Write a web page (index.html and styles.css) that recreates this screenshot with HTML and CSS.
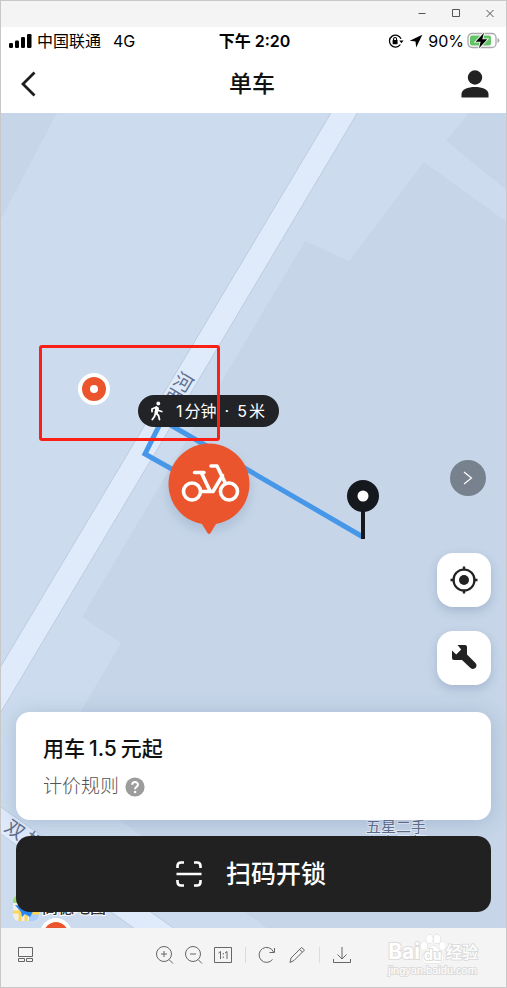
FILE: index.html
```html
<!DOCTYPE html>
<html lang="zh-CN">
<head>
<meta charset="utf-8">
<meta name="viewport" content="width=device-width, initial-scale=1">
<title>单车</title>
<link rel="stylesheet" href="styles.css">
</head>
<body>
<div class="window">
  <div class="titlebar">
    <button class="winbtn" aria-label="最小化"><svg width="10" height="10" viewBox="0 0 10 10"><path d="M1.500 4.500h7"/></svg></button>
    <button class="winbtn" aria-label="最大化"><svg width="10" height="10" viewBox="0 0 10 10"><path d="M1.500 .5h7v7h-7z"/></svg></button>
    <button class="winbtn" aria-label="关闭"><svg width="10" height="10" viewBox="0 0 10 10"><path d="M1.500 1l7 7M8.500 1l-7 7"/></svg></button>
  </div>

  <div class="status">
    <div class="carrier">
      <svg width="24" height="16" viewBox="0 0 24 16"><rect x="0" y="10" width="4" height="5" rx="1.200"/><rect x="6" y="7.500" width="4" height="7.500" rx="1.200"/><rect x="12" y="4" width="4" height="11" rx="1.200"/><rect x="18" y="1" width="4.500" height="14" rx="1.200"/></svg>
      <span>中国联通</span>
      <span class="network">4G</span>
    </div>
    <div class="clock">下午 2:20</div>
    <div class="power">
      <svg width="16" height="16" viewBox="0 0 16 16"><path d="M12.400 11.500A6 6 0 1 1 13 5.800" fill="none" stroke="#000" stroke-width="1.300"/><path d="M11.300 7.500h4.200l-2.100 2.800z"/><rect x="4.600" y="7" width="5" height="4.200" rx=".6"/><path d="M5.600 7.200V6a1.500 1.500 0 0 1 3 0v1.200" fill="none" stroke="#000" stroke-width="1.100"/></svg>
      <svg class="arrow" width="14" height="14" viewBox="0 0 14 14"><path d="M13.300.7 7.200 13.400 6.500 7.400.7 6.800z"/></svg>
      <span>90%</span>
      <svg width="33" height="18" viewBox="0 0 33 18"><rect x="1" y="1.500" width="28" height="14" rx="4" fill="#fff" stroke="#a9a9a9" stroke-width="1.300"/><rect x="3" y="3.500" width="21" height="10" rx="2" fill="#62c466"/><path d="M30.500 6v5q2-.6 2-2.500t-2-2.500z" fill="#a9a9a9"/><path d="M17 .8 8.600 9.700h5L12 16.200l8.300-8.900h-5z" stroke="#fff" stroke-width="1.600" paint-order="stroke"/></svg>
    </div>
  </div>

  <header class="nav">
    <button class="iconbtn" aria-label="返回"><svg width="18" height="28" viewBox="0 0 18 28"><path d="M14.500 2.500 3 14l11.500 11.500" fill="none" stroke="#1d1d1d" stroke-width="2.800"/></svg></button>
    <h1>单车</h1>
    <button class="iconbtn" aria-label="我的"><svg width="28" height="28" viewBox="0 0 28 28" fill="#222"><circle cx="14" cy="7.500" r="7.200"/><path d="M.5 27.500V24C.5 19.500 7 17 14 17s13.500 2.500 13.500 7v3.500z"/></svg></button>
  </header>

  <main class="map">
    <svg class="terrain" viewBox="1 113 505 815" preserveAspectRatio="xMidYMid slice">
      <defs>
        <filter id="soft" x="-50%" y="-50%" width="200%" height="200%"><feGaussianBlur stdDeviation="5"/></filter>
      </defs>
      <rect x="-200" y="0" width="1000" height="1100" fill="#ccdcee"/>
      <g fill="#c6d5e8">
        <path d="M0 113h57L0 221z"/>
        <path d="M469 113l-23 28 62 50v-78z"/>
        <path d="M305 241l44 20 75-99 84 61v706H268L120 820 48 767 121 643 82 617z"/>
      </g>
      <g fill="#dfeafb" stroke="#bdcbdf">
        <path d="M331.500 112-2 671v46L358 112z"/>
        <path d="M-2 805l177 124h-40L-2 832z"/>
      </g>
      <g class="place">
        <text x="174" y="389" transform="rotate(31 183 382)">河</text>
        <text x="164" y="405" transform="rotate(31 173 398)">西</text>
        <text x="6" y="837" transform="rotate(35 16 829)">双</text>
        <text x="25" y="849" transform="rotate(35 35 841)">桥</text>
      </g>
      <g class="poi">
        <text x="366" y="832">五星二手</text>
        <text x="366" y="848">车交易行</text>
      </g>
      <g>
        <clipPath id="logo"><rect x="13" y="895" width="26" height="26" rx="6"/></clipPath>
        <g clip-path="url(#logo)">
          <path d="M13 895h26v26H13z" fill="#eeeeea"/><path d="M13 895h12v8H13z" fill="#9adb6c"/><path d="M29 914h10v7H29z" fill="#a9cdfb"/>
          <path d="M13 912h7v-6M20 910v11M26 921v-8h13" fill="none" stroke="#ffd453" stroke-width="3"/>
          <path d="M15 905l20 3-5 9-5-3-3 3-1-5z" fill="#2486f3"/>
        </g>
        <text class="brand" x="42" y="913">高德地图</text>
      </g>
      <path d="M209 490l-64-36 17-34 201 117" fill="none" stroke="#4797e9" stroke-width="5"/>
      <g id="dot">
        <circle cx="94" cy="389" r="16" fill="#fff"/><circle cx="94" cy="389" r="12" fill="#ea552d"/><circle cx="94" cy="389" r="4" fill="#fff"/>
      </g>
      <use href="#dot" x="-38" y="545"/>
      <path d="M363 505v34" stroke="#15181c" stroke-width="4"/>
      <circle cx="363" cy="496" r="16" fill="#15181c"/><circle cx="363" cy="496" r="5.500" fill="#fff"/>
      <circle cx="209" cy="490" r="42" fill="#8095b3" opacity=".3" filter="url(#soft)"/>
      <path d="M202 524l5.500 9q1.500 2 3 0l5.500-9a40.500 40.500 0 1 0-14 0z" fill="#ea552d"/>
      <g fill="none" stroke="#fff" stroke-width="3.600" stroke-linejoin="round" stroke-linecap="round">
        <circle cx="192" cy="491.500" r="8.500"/><circle cx="229" cy="491.500" r="8.500"/>
        <path d="M201 491.500h12l9.500-16M194.500 472.500h9.500M201.500 473l8.500 18M211 466h6l8.500 17.500"/>
      </g>
    </svg>
    <div class="walk">
      <svg width="16" height="20" viewBox="0 0 16 20" fill="none" stroke="#fff" stroke-width="1.800" stroke-linecap="round" stroke-linejoin="round"><circle cx="9.300" cy="2.500" r="1.900" fill="#fff" stroke="none"/><path d="M3 10.500V8l4.500-2 2 3.500 3.300 1M7.500 6.500l-1 5 3 3 1 4M6.500 12l-1 3.500-2.200 3"/><path d="M7.200 6.500 9 7l-1 5-1.500-.5z" fill="#fff"/></svg>
      <span class="amount"><span>1</span><span>分钟</span></span><span>·</span><span class="amount"><span>5</span><span>米</span></span>
    </div>
    <div class="highlight"></div>

    <div class="tools">
      <button class="expand" aria-label="展开"><svg width="12" height="16" viewBox="0 0 12 16"><path d="M2 2l7.500 6L2 14" fill="none" stroke="#fff" stroke-width="1.200"/></svg></button>
      <button class="tool" aria-label="定位"><svg width="28" height="28" viewBox="0 0 28 28"><circle cx="14" cy="14" r="10.500" fill="none" stroke="#222" stroke-width="2.200"/><circle cx="14" cy="14" r="5" fill="#222"/><path d="M14 .5v4M14 23.500v4M.5 14h4M23.500 14h4" stroke="#222" stroke-width="2.400"/></svg></button>
      <button class="tool" aria-label="报修"><svg width="28" height="28" viewBox="0 0 28 28" fill="#222"><path d="M7.500 1H15q2 0 2 2v7.500l8.500 8.500c3 3.800-1.500 7.800-5 5L12 16H4q-2 0-2-2V6.500l4.200 4 5-5z"/></svg></button>
    </div>

    <section class="card">
      <h2><span>用车</span><span>1.5</span><span>元起</span></h2>
      <a class="rules" href="#">计价规则
        <svg width="20" height="20" viewBox="0 0 20 20"><circle cx="10" cy="10" r="9.600" fill="#9c9c9c"/><path d="M7.200 7.700C7.200 4.200 13 4.200 13 7.700c0 2-2.900 2.300-2.900 4.500" fill="none" stroke="#fff" stroke-width="2"/><circle cx="10.100" cy="15" r="1.300" fill="#fff"/></svg>
      </a>
    </section>
    <button class="unlock">
      <svg width="26" height="26" viewBox="0 0 26 26" fill="none" stroke="#fff" stroke-width="2.600"><path d="M1.500 7V5q0-3.500 3.500-3.500h3M18 1.500h3q3.500 0 3.500 3.500v2M24.500 19v2q0 3.500-3.500 3.500h-3M8 24.500H5Q1.500 24.500 1.500 21v-2M.5 13h25"/></svg>
      <span>扫码开锁</span>
    </button>
  </main>

  <footer class="toolbar">
    <button class="toolbtn" aria-label="缩略图"><svg width="20" height="20" viewBox="0 0 20 20"><path d="M2.500 .5h14v9h-14zM2.500 11.500h6v3h-6zM10.500 11.500h6v3h-6z"/></svg></button>
    <div class="actions">
      <button class="toolbtn" aria-label="放大"><svg width="20" height="20" viewBox="0 0 20 20"><circle cx="9" cy="7" r="7.500"/><path d="M14 12.500l4 4M6 7h6M9 4v6"/></svg></button>
      <button class="toolbtn" aria-label="缩小"><svg width="20" height="20" viewBox="0 0 20 20"><circle cx="9" cy="7" r="7.500"/><path d="M14 12.500l4 4M6 7h6"/></svg></button>
      <button class="toolbtn" aria-label="实际大小"><svg width="20" height="20" viewBox="0 0 20 20"><path d="M1.500 .5h17v15h-17zM5.500 6l2-1.500v7.500M12 6l2-1.500v7.500" /><path d="M10.300 6v1.500M10.300 9.500V11"/></svg></button>
      <i class="sep"></i>
      <button class="toolbtn" aria-label="旋转"><svg width="20" height="20" viewBox="0 0 20 20"><path d="M14.500 12.500A7.500 7.500 0 1 1 15.500 5M16.500 1v4.500h-5"/></svg></button>
      <button class="toolbtn" aria-label="编辑"><svg width="20" height="20" viewBox="0 0 20 20"><path d="M3 15.500l1-4.500L14.500 .5l3 2.500L7 13.500zM12.500 2.500l3 2.500"/></svg></button>
      <i class="sep"></i>
      <button class="toolbtn" aria-label="下载"><svg width="20" height="20" viewBox="0 0 20 20"><path d="M10 0v11.500M5.500 7.500l4.500 4.500 4.500-4.500M1.500 12v3.500h17V12"/></svg></button>
    </div>
    <div class="watermark">
      <div class="mark"><b>Bai</b>
        <svg width="26" height="30" viewBox="0 0 26 30"><g fill="#fff" stroke="#dcdcdc"><ellipse cx="4" cy="12" rx="3.200" ry="4"/><ellipse cx="9.500" cy="5" rx="3.300" ry="4.300"/><ellipse cx="17" cy="5" rx="3.300" ry="4.300"/><ellipse cx="22.500" cy="12" rx="3.200" ry="4"/><path d="M13 12c-4 0-5 4-8 6.500-4 3.500-3 10 2 10.500h12c5-.5 6-7 2-10.500-3-2.500-4-6.500-8-6.500z"/></g><text x="4" y="26">du</text></svg>
        <span>经验</span></div>
      <div class="site">jingyan.baidu.com</div>
    </div>
  </footer>
</div>
</body>
</html>
```
FILE: styles.css
```css
* { box-sizing: border-box; }

body {
  margin: 0;
  font-family: Inter, "Noto Sans CJK SC", sans-serif;
  color: #111;
}

button {
  margin: 0;
  padding: 0;
  border: 0;
  background: none;
  font: inherit;
  display: flex;
  align-items: center;
  justify-content: center;
}

svg { display: block; flex: none; }

.window {
  min-height: 100vh;
  display: flex;
  flex-direction: column;
  border: 1px solid #c8c8c8;
  background: #fff;
}

.titlebar {
  height: 26px;
  padding: 0 11px;
  display: flex;
  align-items: center;
  justify-content: flex-end;
  gap: 24px;
  background: #f4f4f4;
}

.winbtn svg { fill: none; stroke: #555; }

.status {
  height: 28px;
  padding: 0 6px 0 8px;
  display: grid;
  grid-template-columns: 1fr auto 1fr;
  align-items: center;
  font-size: 16px;
  line-height: 24px;
  color: #000;
}

.carrier, .power { display: flex; align-items: center; }
.carrier { gap: 4px; }
.network { margin-left: 8px; }
.clock { font-weight: 600; }
.power { justify-content: flex-end; gap: 3px; }
.arrow { margin: 0 2px; }

.nav {
  height: 58px;
  padding: 0 17px 0 14px;
  display: flex;
  align-items: center;
  justify-content: space-between;
}

.nav h1 {
  margin: 0;
  font-size: 23px;
  line-height: 32px;
  font-weight: 500;
}

.iconbtn { width: 28px; height: 28px; }

.map {
  position: relative;
  flex: 1;
  padding: 16px 15px;
  display: flex;
  flex-direction: column;
  justify-content: flex-end;
  gap: 16px;
  overflow: hidden;
}

.terrain {
  position: absolute;
  inset: 0;
  width: 100%;
  height: 100%;
}

.place { font-size: 19px; fill: #5f6f8b; }
.poi { font-size: 15px; fill: #5f6f8b; stroke: #e4ecf8; stroke-width: 2px; paint-order: stroke; }
.brand { font-size: 16px; font-weight: 500; fill: #333; stroke: #fff; stroke-width: 2px; paint-order: stroke; }

.walk {
  position: absolute;
  left: 137px;
  top: 282px;
  height: 32px;
  padding: 0 14px 0 11px;
  display: flex;
  align-items: center;
  gap: 8px;
  border-radius: 16px;
  background: #222326;
  color: #fff;
  font-size: 16px;
  line-height: 24px;
  white-space: nowrap;
}

.walk svg { margin-right: 3px; }
.amount { display: flex; gap: 2px; }

.highlight {
  position: absolute;
  left: 38px;
  top: 232px;
  width: 181px;
  height: 96px;
  border: 3px solid #fb2015;
  border-radius: 3px;
}

.tools {
  position: relative;
  display: flex;
  flex-direction: column;
  align-items: flex-end;
  gap: 24px;
  padding-bottom: 11px;
}

.expand {
  width: 36px;
  height: 36px;
  margin: 0 5px 33px 0;
  border-radius: 50%;
  background: #78828e;
}

.tool {
  width: 54px;
  height: 54px;
  border-radius: 16px;
  background: #fff;
  box-shadow: 0 4px 10px rgba(70, 95, 140, 0.25);
}

.card {
  position: relative;
  padding: 21px 27px;
  border-radius: 14px;
  background: #fff;
  box-shadow: 0 2px 20px rgba(70, 95, 140, 0.25);
}

.card h2 {
  margin: 0 0 10px;
  display: flex;
  gap: 4px;
  font-size: 21px;
  line-height: 32px;
  font-weight: 500;
}

.rules {
  display: flex;
  align-items: center;
  gap: 6px;
  font-size: 19px;
  line-height: 24px;
  font-weight: 300;
  color: #555;
  text-decoration: none;
}

.unlock {
  position: relative;
  height: 76px;
  gap: 24px;
  padding-right: 5px;
  border-radius: 14px;
  background: #212121;
  color: #fff;
  font-size: 25px;
  line-height: 32px;
  font-weight: 500;
}

.toolbar {
  height: 59px;
  padding: 0 15px 6px;
  display: grid;
  grid-template-columns: 1fr auto 1fr;
  align-items: center;
  background: #f4f4f4;
}

.actions { display: flex; align-items: center; gap: 9px; }
.toolbtn { width: 20px; height: 16px; }
.toolbtn svg { fill: none; stroke: #666; overflow: visible; }
.sep { width: 1px; height: 16px; margin: 0 3px; background: #dcdcdc; }

.toolbtn svg { margin-top: 4px; }

.watermark {
  justify-self: end;
  margin-right: 13px;
  color: #fff;
  -webkit-text-stroke: 2px #dcdcdc;
  paint-order: stroke;
}

.mark { display: flex; align-items: flex-end; height: 32px; font-size: 21px; line-height: 24px; }
.mark span { font-size: 16px; font-weight: 500; }
.mark text { font-size: 14px; font-weight: 700; fill: #fff; stroke: #dcdcdc; stroke-width: 2px; paint-order: stroke; }
.site { font-family: "Liberation Sans", sans-serif; font-size: 11px; line-height: 13px; }
```
